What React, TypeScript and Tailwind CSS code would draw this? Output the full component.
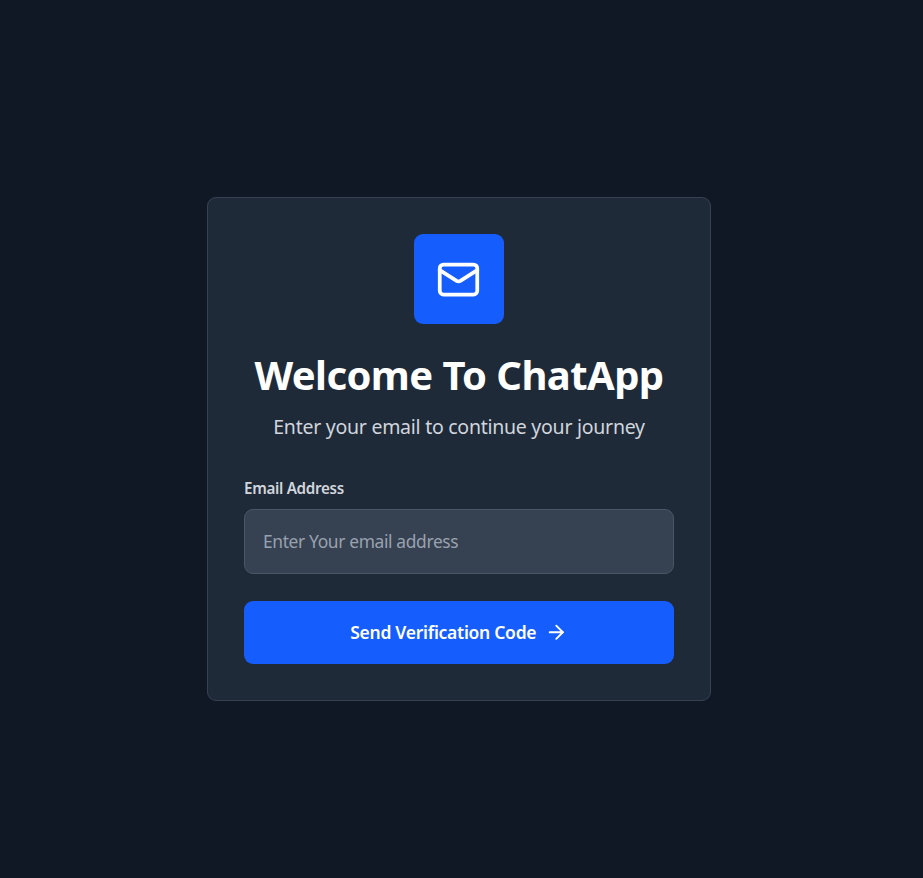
import { ArrowRight, Mail } from "lucide-react";

export default function App() {
  return (
    <div className="flex h-[878px] w-full flex-col items-center bg-[#101725] pt-[197px] pr-[5px] font-['Noto_Sans',sans-serif]">
      <main className="flex h-[504px] w-[504px] flex-col rounded-[9px] border border-[#364152] bg-[#1f2a39] p-[36px]">
        <header className="text-center">
          <div className="mx-auto flex size-[90px] items-center justify-center rounded-[9px] bg-[#155dfc] pr-[2px]">
            <Mail className="size-[45px] text-white" strokeWidth={2} />
          </div>
          <h1 className="mt-[28px] h-[45px] text-[40px] leading-[45px] font-bold tracking-[-0.58px] whitespace-nowrap text-white">
            Welcome To ChatApp
          </h1>
          <p className="mt-[14px] h-[32px] text-[19.5px] leading-[32px] tracking-[-0.26px] whitespace-nowrap text-[#d1d5dc]">
            Enter your email to continue your journey
          </p>
        </header>
        <form className="mt-[34px]" onSubmit={(e) => e.preventDefault()}>
          <label
            htmlFor="email"
            className="block h-[23px] text-[15.2px] leading-[23px] font-semibold tracking-[-0.3px] text-[#d1d5dc]"
          >
            Email Address
          </label>
          <input
            id="email"
            type="email"
            placeholder="Enter Your email address"
            className="mt-[9px] block h-[65px] w-full rounded-[9px] border border-[#4a5565] bg-[#364152] px-[18px] pb-[2px] text-[17.4px] tracking-[-0.36px] text-white placeholder-[#99a1af] outline-none"
          />
          <button
            type="submit"
            className="mt-[27px] flex h-[63px] w-full items-center justify-center gap-[9px] rounded-[9px] bg-[#155dfc] text-[17.5px] font-semibold tracking-[-0.28px] text-white"
          >
            <span>Send Verification Code</span>
            <ArrowRight className="size-[22.5px]" />
          </button>
        </form>
      </main>
    </div>
  );
}
